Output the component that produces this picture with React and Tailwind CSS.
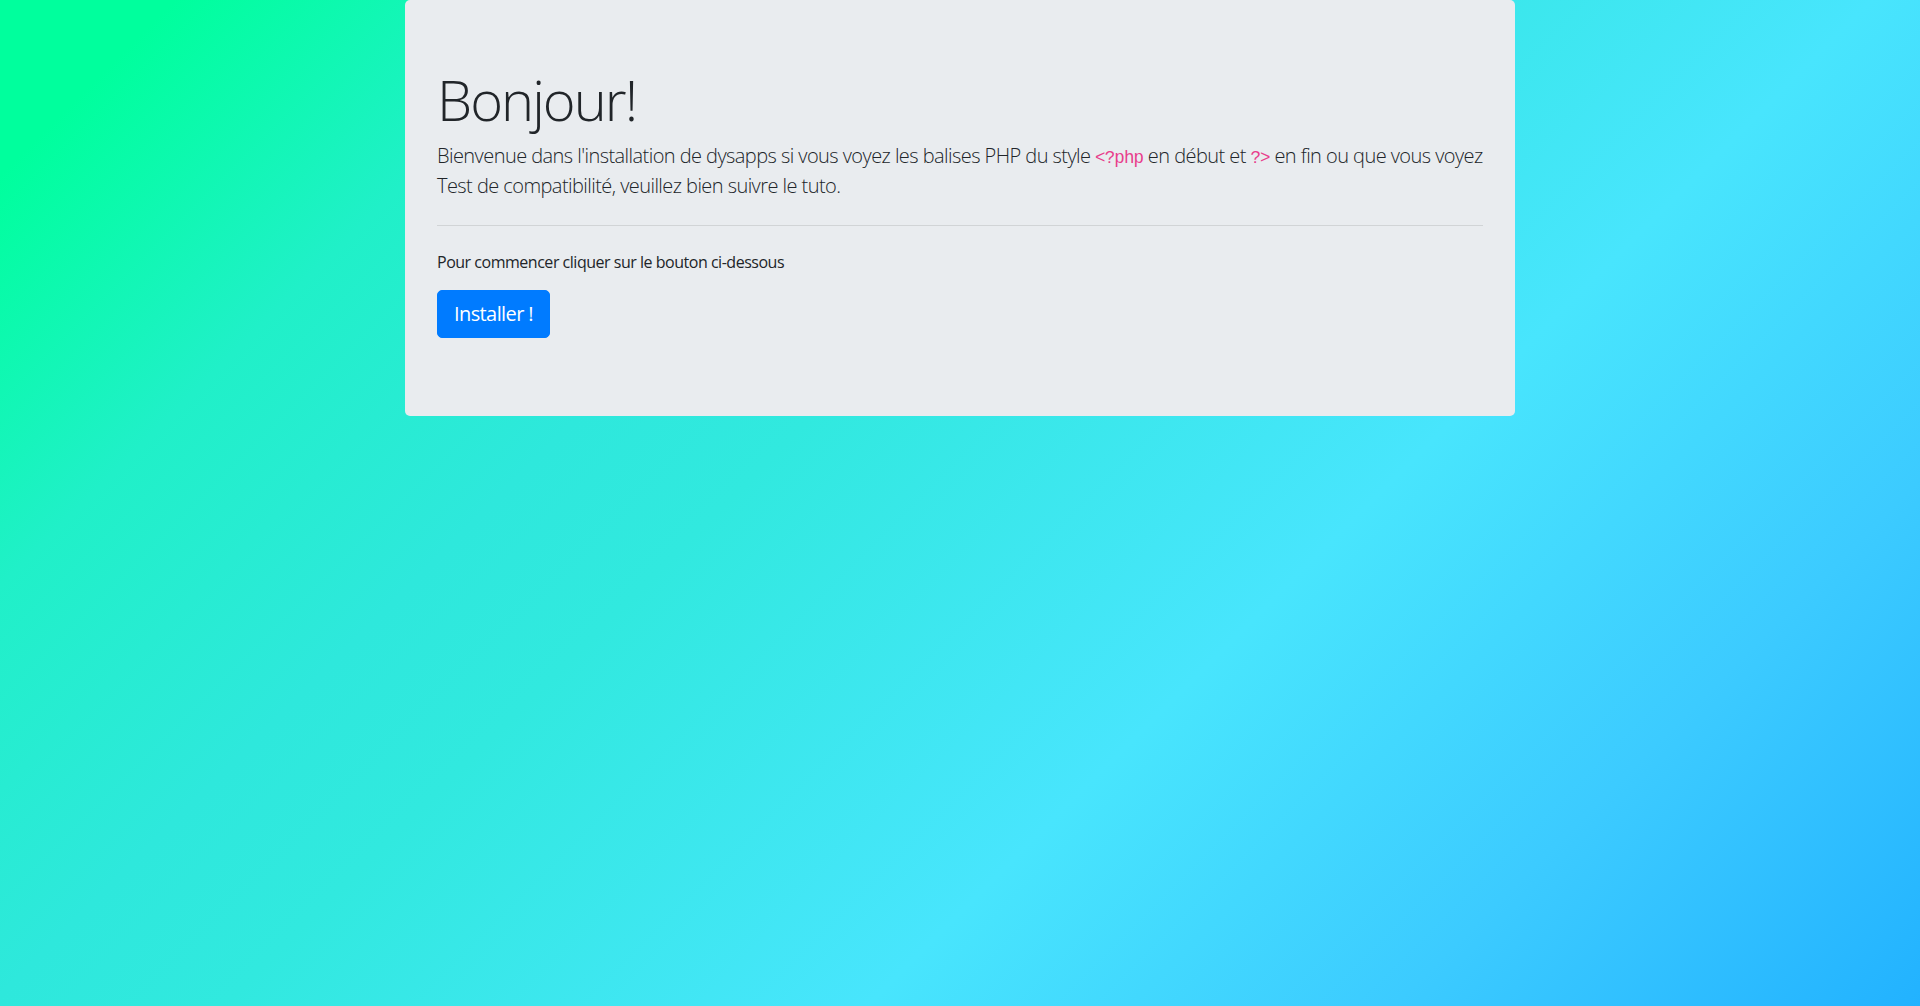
const font = { fontFamily: '"Open Sans", "Noto Sans", "Liberation Sans", sans-serif' };

export default function App() {
  return (
    <div
      className="min-h-[1006px] w-full bg-[linear-gradient(135deg,#00ff9d_6%,#20f0c8_20%,#2ee8dc_34%,#31e9df_42%,#48e5fd_64%,#3ccbff_82%,#22b2ff_100%)] text-[#212529]"
      style={font}
    >
      <div className="mx-auto w-[1110px] rounded-[5px] bg-[#e9ecef] px-8 pt-[66px] pb-[62px]">
        <h1 className="mb-2 text-[56px] font-light leading-[1.2] tracking-[-0.035em]">Bonjour!</h1>
        <p className="mb-4 text-[20px] font-light leading-[1.5] tracking-[-0.028em]">
          Bienvenue dans l'installation de dysapps si vous voyez les balises PHP du style{" "}
          <code className="font-['Liberation_Mono',monospace] text-[17.5px] tracking-[-0.05em] text-[#e83e8c]">&lt;?php</code>{" "}
          en début et{" "}
          <code className="font-['Liberation_Mono',monospace] text-[17.5px] tracking-[-0.05em] text-[#e83e8c]">?&gt;</code>{" "}
          en fin ou que vous voyez Test de compatibilité, veuillez bien suivre le tuto.
        </p>
        <hr className="my-6 border-0 border-t border-black/10" />
        <p className="mb-4 text-base leading-6 tracking-[-0.03em]">Pour commencer cliquer sur le bouton ci-dessous</p>
        <p className="mb-4 text-[20px] leading-[1.5]">
          <button
            type="button"
            className="h-12 rounded-[5px] border border-[#007bff] bg-[#007bff] px-4 text-[20px] leading-[1.5] tracking-[-0.03em] text-white"
          >
            Installer !
          </button>
        </p>
      </div>
    </div>
  );
}
